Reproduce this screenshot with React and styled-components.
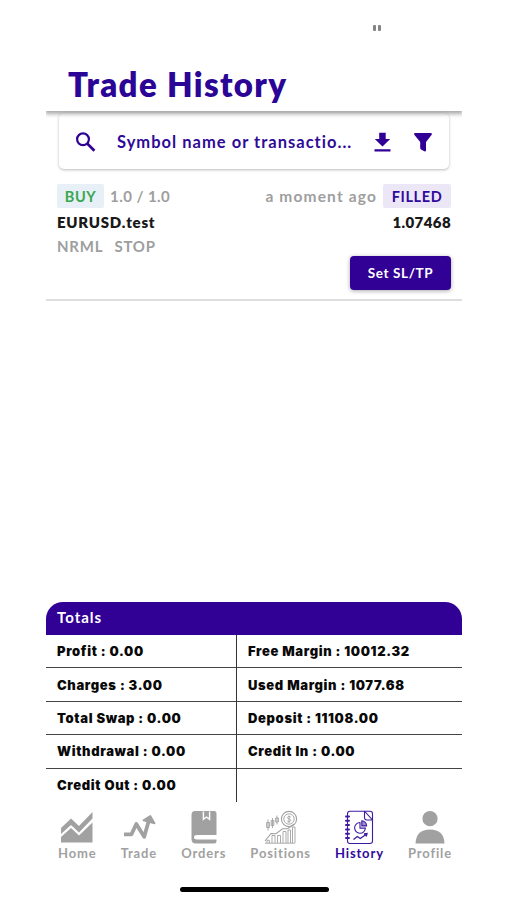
import styled, { createGlobalStyle } from 'styled-components';

const GlobalStyle = createGlobalStyle`
  * {
    box-sizing: border-box;
  }

  body {
    margin: 0;
    background: #fff;
    font-family: Lato, "Open Sans", sans-serif;
    font-weight: 700;
  }

  svg {
    display: block;
    flex: none;
  }
`;

const Screen = styled.div`
  width: 507px;
  height: 900px;
  padding: 0 45px 0 46px;
  display: flex;
  flex-direction: column;
  overflow: hidden;
  background: #fff;
`;

const Header = styled.header`
  position: relative;
  z-index: 1;
  height: 111px;
  padding: 25px 0 0 22px;
  display: flex;
  flex-direction: column;
  background: #fff;
  box-shadow: 0 2px 4px 1px rgba(0, 0, 0, .34);
  clip-path: inset(0 0 -8px 0);
`;

const StatusMark = styled.div`
  height: 7px;
  margin: 0 81px 0 auto;
  display: flex;
  gap: 2px;

  span {
    width: 3px;
    height: 6px;
    border-radius: 1px;
    background: #858585;
  }
`;

const Title = styled.h1`
  margin: 32px 0 0;
  font-size: 33px;
  line-height: 40px;
  font-weight: 800;
  letter-spacing: 1.35px;
  color: #2b0596;
`;

const SearchBar = styled.div`
  height: 56px;
  margin: 2px 13px 0;
  padding: 2px 17px 0;
  display: flex;
  align-items: center;
  border-radius: 5px;
  background: #fff;
  box-shadow: 0 1px 3px rgba(0, 0, 0, .27);
`;

const SearchText = styled.div`
  flex: 1;
  padding: 0 0 0 21px;
  font-size: 16.5px;
  letter-spacing: 1.02px;
  white-space: nowrap;
  color: #2f0a98;
`;

const Order = styled.section`
  height: 132px;
  padding: 15px 11px 0;
  border-bottom: 2px solid #dedede;
`;

const Row = styled.div`
  height: ${({ $height }) => $height}px;
  display: flex;
  align-items: center;
  justify-content: space-between;
`;

const Group = styled.div`
  display: flex;
  align-items: center;
  gap: ${({ $gap }) => $gap}px;
`;

const Badge = styled.span`
  width: ${({ $width }) => $width}px;
  height: 24px;
  display: flex;
  align-items: center;
  justify-content: center;
  border-radius: 2px;
  font-size: 14.5px;
  letter-spacing: .6px;
  color: ${({ $filled }) => ($filled ? '#3208a0' : '#3ba650')};
  background: ${({ $filled }) => ($filled ? '#ece7f6' : '#e6f0f6')};
`;

const Muted = styled.span`
  font-size: ${({ $size }) => $size || 15}px;
  letter-spacing: ${({ $spacing }) => $spacing || .8}px;
  color: #9e9e9e;
`;

const Strong = styled.span`
  font-size: 15px;
  font-weight: 800;
  letter-spacing: ${({ $spacing }) => $spacing}px;
  color: #191919;
`;

const ActionRow = styled.div`
  display: flex;
  justify-content: flex-end;
`;

const ActionButton = styled.button`
  width: 101px;
  height: 34px;
  padding: 0;
  border: 0;
  border-radius: 4px;
  font: 700 13.5px Lato, sans-serif;
  letter-spacing: .6px;
  color: #fff;
  background: #310095;
  box-shadow: 0 1px 4px rgba(0, 0, 0, .35);
`;

const Totals = styled.section`
  margin-top: auto;
  flex: none;
`;

const TotalsHeader = styled.div`
  height: 33px;
  padding-left: 11px;
  border-radius: 17px 17px 0 0;
  font-size: 15px;
  line-height: 31px;
  letter-spacing: 1px;
  color: #fff;
  background: #310095;
`;

const TotalsGrid = styled.div`
  display: grid;
  grid-template-columns: 191px 1fr;
  grid-auto-rows: 33.4px;
  font: 900 13px Inter, sans-serif;
  letter-spacing: .65px;
  color: #090909;
`;

const Cell = styled.div`
  padding: 0 0 0 11px;
  display: flex;
  align-items: center;
  border-bottom: ${({ $last }) => ($last ? '0' : '1px solid #444')};
  border-right: ${({ $left }) => ($left ? '1px solid #333' : '0')};
`;

const Nav = styled.nav`
  height: 98px;
  flex: none;
  padding: 8px 10px 0 12px;
  display: flex;
  justify-content: space-between;
  align-items: flex-start;
`;

const NavItem = styled.div`
  display: flex;
  flex-direction: column;
  align-items: center;
  font-size: 13px;
  line-height: 15px;
  letter-spacing: .85px;
  color: ${({ $active }) => ($active ? '#310a9b' : '#a1a1a1')};
`;

const HomeBar = styled.div`
  width: 149px;
  height: 5px;
  margin: -13px auto 8px 134px;
  flex: none;
  border-radius: 3px;
  background: #000;
`;

const SearchIcon = () => (
  <svg width="20" height="20" viewBox="0 0 20 20" fill="none" stroke="#310095" strokeWidth="2.2">
    <circle cx="7" cy="7.3" r="5.9" />
    <path d="M11.2 11.5L18.4 18.7" strokeWidth="2.7" />
  </svg>
);

const DownloadIcon = () => (
  <svg width="18" height="20" viewBox="0 0 18 20" fill="#310095">
    <path d="M5.2.7h6.5v6.2h4.5L8.5 14.5.8 6.9h4.4zM.5 17.2h16v2.3H.5z" />
  </svg>
);

const FilterIcon = () => (
  <svg width="18" height="19" viewBox="0 0 18 19" fill="#310095">
    <path d="M.7 0h16.6q1 .7.2 1.9L12 9v8.4q-.4 1.4-1.6.8L7 16.4q-.8-.5-.8-1.4V9L.5 1.9Q-.3.7.7 0z" />
  </svg>
);

const HomeIcon = () => (
  <svg width="34" height="36" viewBox="0 0 34 36" fill="#a1a1a1">
    <path d="M1 18L11 8.5l8 7.5L32.5 2V8.5L19 22.5l-8-7.5L1 24z" />
    <path d="M1 27L11 18l8 7.5L32.5 12.5v20H1z" />
  </svg>
);

const TradeIcon = () => (
  <svg width="34" height="36" viewBox="0 0 34 36" fill="none" stroke="#a1a1a1" strokeWidth="3.8" strokeLinejoin="round">
    <path d="M2 24.3h7.5L14.3 14l7.9 12.8L27 10" />
    <path d="M21.5 10.3L28.3 6l4.2 7.3z" fill="#a1a1a1" strokeWidth="1.8" />
  </svg>
);

const OrdersIcon = () => (
  <svg width="28" height="36" viewBox="0 0 28 36" fill="#a1a1a1">
    <path d="M5 1h19q2.5 0 2.5 2.5V25H7q-3 0-3 2.2t3 2.2h19.5V31q0 2.5-2.5 2.5H6Q1.5 33.5 1.5 29V5q0-4 3.5-4z" />
    <path d="M13.4 1.5v7.8l3.1-2.3 3.1 2.3V1.5" fill="#a1a1a1" stroke="#fff" strokeWidth="1.4" />
  </svg>
);

const PositionsIcon = () => (
  <svg width="34" height="36" viewBox="0 0 34 36" fill="none" stroke="#a1a1a1">
    <circle cx="25" cy="9" r="7.6" strokeWidth="1.1" />
    <circle cx="25" cy="9" r="5.2" strokeWidth=".9" />
    <path d="M26.8 7q-3-1.5-3.4.4 0 1.2 1.7 1.6t1.7 1.6q-.5 1.8-3.6.6M25 5.5v7.5" strokeWidth=".9" />
    <path d="M4 9.5v11M8.5 8v10M13 5.5v9" strokeWidth=".9" />
    <path d="M2.7 12.5h2.6v5H2.7zM7.2 10.5h2.6v5H7.2zM11.7 8h2.6v4h-2.6z" strokeWidth="1" />
    <path d="M1 31l6-7.5 5 .3 6.5-5h5l6.5-4.5" strokeWidth="1.1" />
    <path d="M1 33.2h30M3 33v-2.7h2.4V33M8 33v-7.5h3V33M13.5 33v-7.5h3V33M19 33V21.5h3V33M24 33V20h2.5v13M28.5 33V17h2.5v16" strokeWidth=".9" />
  </svg>
);

const HistoryIcon = () => (
  <svg width="30" height="36" viewBox="0 0 30 36" fill="none" stroke="#3f1ba3" strokeWidth="1.1">
    <path d="M20.5 1.2H6Q3.5 1.2 3.5 3.7v27.3q0 2.5 2.5 2.5h20q2.5 0 2.5-2.5V10z" />
    <path d="M20.5 1.2V7.5q0 2.5 2.5 2.5h5.5M20.5 1.2H26q2.5 0 2.5 2.5v6.3" />
    <path d="M2 6.5h3M2 10.8h3M2 15.1h3M2 19.4h3M2 23.7h3M2 28h3" strokeWidth="2" strokeLinecap="round" />
    <path d="M16 12.5a5.4 5.4 0 1 0 5.4 5.6H16z" />
    <path d="M17.8 10.9a5 5 0 0 1 4.8 5h-4.8z" fill="#9d8bce" />
    <path d="M9.5 29.5l3.8-3 3 2 6-4.2M20 24l3-.5-.8 3" strokeWidth="1.3" />
  </svg>
);

const ProfileIcon = () => (
  <svg width="32" height="36" viewBox="0 0 32 36" fill="#a1a1a1">
    <circle cx="16" cy="8.7" r="7.6" />
    <path d="M1.5 33.5q.5-14 14.5-14t14.5 14z" />
  </svg>
);

const totals = [
  'Profit : 0.00', 'Free Margin : 10012.32',
  'Charges : 3.00', 'Used Margin : 1077.68',
  'Total Swap : 0.00', 'Deposit : 11108.00',
  'Withdrawal : 0.00', 'Credit In : 0.00',
  'Credit Out : 0.00', '',
];

const tabs = [
  { label: 'Home', Icon: HomeIcon },
  { label: 'Trade', Icon: TradeIcon },
  { label: 'Orders', Icon: OrdersIcon },
  { label: 'Positions', Icon: PositionsIcon },
  { label: 'History', Icon: HistoryIcon, active: true },
  { label: 'Profile', Icon: ProfileIcon },
];

const App = () => {
  return (
    <Screen>
      <GlobalStyle />
      <Header>
        <StatusMark><span /><span /></StatusMark>
        <Title>Trade History</Title>
      </Header>
      <SearchBar>
        <SearchIcon />
        <SearchText>Symbol name or transactio...</SearchText>
        <Group $gap={22}>
          <DownloadIcon />
          <FilterIcon />
        </Group>
      </SearchBar>
      <Order>
        <Row $height={24}>
          <Group $gap={6}>
            <Badge $width={47}>BUY</Badge>
            <Muted $spacing={.45}>1.0 / 1.0</Muted>
          </Group>
          <Group $gap={6}>
            <Muted $size={15.5} $spacing={1.15}>a moment ago</Muted>
            <Badge $width={68} $filled>FILLED</Badge>
          </Group>
        </Row>
        <Row $height={27}>
          <Strong $spacing={.75}>EURUSD.test</Strong>
          <Strong $spacing={.4}>1.07468</Strong>
        </Row>
        <Row $height={21}>
          <Group $gap={11}>
            <Muted>NRML</Muted>
            <Muted>STOP</Muted>
          </Group>
        </Row>
        <ActionRow>
          <ActionButton>Set SL/TP</ActionButton>
        </ActionRow>
      </Order>
      <Totals>
        <TotalsHeader>Totals</TotalsHeader>
        <TotalsGrid>
          {totals.map((text, i) => (
            <Cell key={i} $left={i % 2 === 0} $last={i > 7}>{text}</Cell>
          ))}
        </TotalsGrid>
      </Totals>
      <Nav>
        {tabs.map(({ label, Icon, active }) => (
          <NavItem key={label} $active={active}>
            <Icon />
            {label}
          </NavItem>
        ))}
      </Nav>
      <HomeBar />
    </Screen>
  );
}

export default App;
